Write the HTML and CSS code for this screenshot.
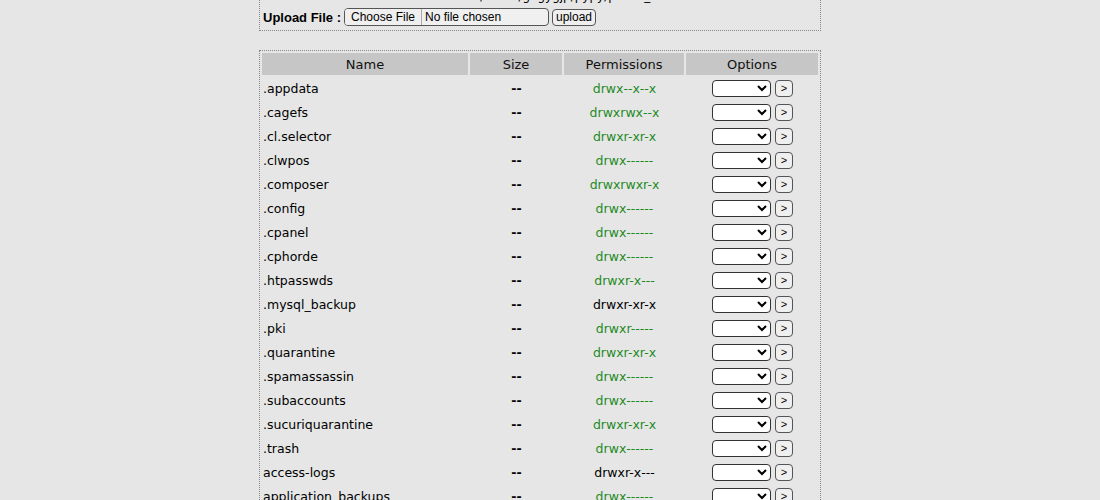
FILE: index.html
```html
<!DOCTYPE html>
<html>
<head>
<meta charset="utf-8">
<title>File Manager</title>
<link rel="stylesheet" href="styles.css">
</head>
<body>
<div class="wrap">
  <div class="box upload-box">
    <div class="path-line">Path : /home/gagygjp/pypy/public_html</div>
    <form class="upload-row">
      <span class="upload-label">Upload File :</span>
      <input type="file" class="file-in">
      <button type="button" class="btn">upload</button>
    </form>
  </div>

  <table class="files">
    <colgroup>
      <col class="c-name"><col class="c-size"><col class="c-perm"><col class="c-opt">
    </colgroup>
    <thead>
      <tr><th>Name</th><th>Size</th><th>Permissions</th><th>Options</th></tr>
    </thead>
    <tbody>
      <tr><td>.appdata</td><td class="ctr sz">--</td><td class="ctr ok">drwx--x--x</td><td class="ctr"><select class="sel"><option></option></select><button class="go">&gt;</button></td></tr>
      <tr><td>.cagefs</td><td class="ctr sz">--</td><td class="ctr ok">drwxrwx--x</td><td class="ctr"><select class="sel"><option></option></select><button class="go">&gt;</button></td></tr>
      <tr><td>.cl.selector</td><td class="ctr sz">--</td><td class="ctr ok">drwxr-xr-x</td><td class="ctr"><select class="sel"><option></option></select><button class="go">&gt;</button></td></tr>
      <tr><td>.clwpos</td><td class="ctr sz">--</td><td class="ctr ok">drwx------</td><td class="ctr"><select class="sel"><option></option></select><button class="go">&gt;</button></td></tr>
      <tr><td>.composer</td><td class="ctr sz">--</td><td class="ctr ok">drwxrwxr-x</td><td class="ctr"><select class="sel"><option></option></select><button class="go">&gt;</button></td></tr>
      <tr><td>.config</td><td class="ctr sz">--</td><td class="ctr ok">drwx------</td><td class="ctr"><select class="sel"><option></option></select><button class="go">&gt;</button></td></tr>
      <tr><td>.cpanel</td><td class="ctr sz">--</td><td class="ctr ok">drwx------</td><td class="ctr"><select class="sel"><option></option></select><button class="go">&gt;</button></td></tr>
      <tr><td>.cphorde</td><td class="ctr sz">--</td><td class="ctr ok">drwx------</td><td class="ctr"><select class="sel"><option></option></select><button class="go">&gt;</button></td></tr>
      <tr><td>.htpasswds</td><td class="ctr sz">--</td><td class="ctr ok">drwxr-x---</td><td class="ctr"><select class="sel"><option></option></select><button class="go">&gt;</button></td></tr>
      <tr><td>.mysql_backup</td><td class="ctr sz">--</td><td class="ctr">drwxr-xr-x</td><td class="ctr"><select class="sel"><option></option></select><button class="go">&gt;</button></td></tr>
      <tr><td>.pki</td><td class="ctr sz">--</td><td class="ctr ok">drwxr-----</td><td class="ctr"><select class="sel"><option></option></select><button class="go">&gt;</button></td></tr>
      <tr><td>.quarantine</td><td class="ctr sz">--</td><td class="ctr ok">drwxr-xr-x</td><td class="ctr"><select class="sel"><option></option></select><button class="go">&gt;</button></td></tr>
      <tr><td>.spamassassin</td><td class="ctr sz">--</td><td class="ctr ok">drwx------</td><td class="ctr"><select class="sel"><option></option></select><button class="go">&gt;</button></td></tr>
      <tr><td>.subaccounts</td><td class="ctr sz">--</td><td class="ctr ok">drwx------</td><td class="ctr"><select class="sel"><option></option></select><button class="go">&gt;</button></td></tr>
      <tr><td>.sucuriquarantine</td><td class="ctr sz">--</td><td class="ctr ok">drwxr-xr-x</td><td class="ctr"><select class="sel"><option></option></select><button class="go">&gt;</button></td></tr>
      <tr><td>.trash</td><td class="ctr sz">--</td><td class="ctr ok">drwx------</td><td class="ctr"><select class="sel"><option></option></select><button class="go">&gt;</button></td></tr>
      <tr><td>access-logs</td><td class="ctr sz">--</td><td class="ctr">drwxr-x---</td><td class="ctr"><select class="sel"><option></option></select><button class="go">&gt;</button></td></tr>
      <tr><td>application_backups</td><td class="ctr sz">--</td><td class="ctr ok">drwx------</td><td class="ctr"><select class="sel"><option></option></select><button class="go">&gt;</button></td></tr>
      <tr><td>etc</td><td class="ctr sz">--</td><td class="ctr ok">drwxr-x---</td><td class="ctr"><select class="sel"><option></option></select><button class="go">&gt;</button></td></tr>
      <tr><td>logs</td><td class="ctr sz">--</td><td class="ctr ok">drwx------</td><td class="ctr"><select class="sel"><option></option></select><button class="go">&gt;</button></td></tr>
    </tbody>
  </table>
</div>
</body>
</html>
```

FILE: styles.css
```css
html, body {
  margin: 0;
  padding: 0;
  background: #e6e6e6;
  color: #000;
  font-family: "Comic Sans MS", "DejaVu Sans", sans-serif;
  font-size: 12px;
  overflow: hidden;
}

.wrap {
  width: 562px;
  margin-left: 259px;
}

.box {
  border: 1px dotted #888;
  box-sizing: border-box;
}

.upload-box {
  margin-top: -13px;
  padding: 0 3px 2px 3px;
}

.path-line {
  height: 18px;
  line-height: 16px;
  text-align: center;
  padding-left: 40px;
  font-size: 12px;
}

.upload-row {
  display: flex;
  align-items: center;
  gap: 3px;
  margin: 0;
  height: 22px;
}

.upload-label {
  font-family: "Liberation Sans", Arial, sans-serif;
  font-weight: bold;
  font-size: 13px;
  margin-right: 0;
}

.file-in {
  width: 205px;
  height: 18px;
  box-sizing: border-box;
  border: 1px solid #555;
  border-radius: 4px;
  background: #f0f0f0;
  font-family: "Liberation Sans", Arial, sans-serif;
  font-size: 12px;
  color: #000;
  padding: 0;
  overflow: hidden;
}

.file-in::file-selector-button {
  font-family: "Liberation Sans", Arial, sans-serif;
  font-size: 12px;
  height: 16px;
  border: none;
  border-right: 1px solid #aaa;
  background: #efefef;
  margin: 0 3px 0 0;
  padding: 0 6px;
}

.btn {
  height: 17px;
  padding: 0 3px;
  border: 1px solid #555;
  border-radius: 4px;
  background: #efefef;
  font-family: "Liberation Sans", Arial, sans-serif;
  font-size: 12px;
  line-height: 14px;
  color: #000;
}

.files {
  margin-top: 19px;
  width: 562px;
  table-layout: fixed;
  border: 1px dotted #888;
  border-spacing: 2px;
  border-collapse: separate;
}

.c-name { width: 206px; }
.c-size { width: 92px; }
.c-perm { width: 120px; }
.c-opt { width: auto; }

.files th {
  background: #c6c6c6;
  font-weight: normal;
  font-size: 13px;
  height: 22px;
  padding: 0;
  color: #111;
}

.files td {
  height: 22px;
  padding: 0 0 0 1px;
  font-size: 12.5px;
  white-space: nowrap;
  overflow: hidden;
}

.files td.ctr {
  text-align: center;
}

.files td.sz {
  font-weight: bold;
}

.ok {
  color: #1f8a1f;
}

.sel {
  width: 59px;
  height: 17px;
  box-sizing: border-box;
  border: 1px solid #333;
  border-radius: 4px;
  background: #fff;
  vertical-align: middle;
  padding: 0;
  font-size: 11px;
}

.go {
  width: 18px;
  height: 17px;
  margin-left: 4px;
  padding: 0;
  border: 1px solid #555;
  border-radius: 4px;
  background: #efefef;
  font-family: "Liberation Sans", Arial, sans-serif;
  font-size: 11px;
  line-height: 13px;
  vertical-align: middle;
  color: #000;
}
```
